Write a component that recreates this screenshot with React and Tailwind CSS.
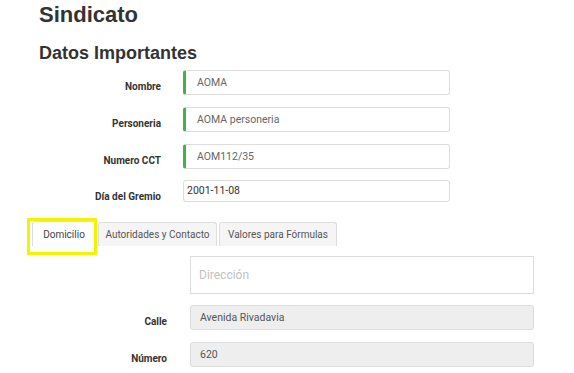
export default function App() {
  const topRows = [
    { label: "Nombre", value: "AOMA", green: true },
    { label: "Personeria", value: "AOMA personeria", green: true },
    { label: "Numero CCT", value: "AOM112/35", green: true },
  ];
  return (
    <div className="w-[574px] h-[373px] overflow-hidden bg-white font-['Roboto',sans-serif] text-[#333]">
      <h1 className="pl-[39px] pt-[2px] h-[28px] text-[22px] leading-[26px] font-bold font-['Liberation_Sans',Arial,sans-serif] text-[#333]">
        Sindicato
      </h1>
      <h2 className="pl-[39px] mt-[14px] h-[22px] text-[18px] leading-[22px] font-bold font-['Liberation_Sans',Arial,sans-serif] text-[#333]">
        Datos Importantes
      </h2>
      <div className="mt-[6px] flex flex-col gap-[12px]">
        {topRows.map((r) => (
          <div key={r.label} className="flex items-start">
            <div className="w-[161px] pt-[10px] text-right text-[10px] leading-[14px] font-bold text-[#333]">
              {r.label}
            </div>
            <div className="ml-[22px] w-[267px] h-[25px] flex items-center rounded-[3px] border border-[#dcdcdc] border-l-[3px] border-l-[#44b04c] pl-[11px] text-[10.5px] text-[#666]">
              {r.value}
            </div>
          </div>
        ))}
        <div className="flex items-start -mt-[1px]">
          <div className="w-[161px] pt-[10px] text-right text-[10px] leading-[14px] font-bold text-[#333]">
            Día del Gremio
          </div>
          <div className="ml-[22px] w-[267px] h-[22px] flex items-center rounded-[3px] border border-[#dcdcdc] pl-[3px] text-[10.5px] text-[#333]">
            2001-11-08
          </div>
        </div>
      </div>
      <div className="mt-[17px] ml-[32px] flex items-end gap-[2px] h-[25px]">
        <div className="relative w-[64px] h-[25px] flex items-center justify-center rounded-t-[3px] border border-b-0 border-[#dddddd] bg-white text-[10px] text-[#3d4450]">
          Domicilio
          <div className="absolute left-[-6px] top-[-4px] w-[70px] h-[37px] border-[3px] border-[#f5f200]"></div>
        </div>
        <div className="w-[119px] h-[24px] flex items-center justify-center rounded-t-[3px] border border-b-0 border-[#dddddd] bg-[#f5f5f5] text-[10px] text-[#555]">
          Autoridades y Contacto
        </div>
        <div className="w-[118px] h-[24px] flex items-center justify-center rounded-t-[3px] border border-b-0 border-[#dddddd] bg-[#f5f5f5] text-[10px] text-[#555]">
          Valores para Fórmulas
        </div>
      </div>
      <div className="mt-[10px] ml-[190px] w-[344px] h-[38px] flex items-center border border-[#dcdcdc] pl-[8px] text-[12px] text-[#c2c2c2]">
        Dirección
      </div>
      <div className="mt-[11px] flex flex-col gap-[12px]">
        {[
          { label: "Calle", value: "Avenida Rivadavia" },
          { label: "Número", value: "620" },
        ].map((r) => (
          <div key={r.label} className="flex items-start">
            <div className="w-[167px] pt-[10px] text-right text-[10px] leading-[14px] font-bold text-[#333]">
              {r.label}
            </div>
            <div className="ml-[23px] w-[344px] h-[25px] flex items-center rounded-[3px] border border-[#dcdcdc] bg-[#eeeeee] pl-[9px] text-[10.5px] text-[#555]">
              {r.value}
            </div>
          </div>
        ))}
      </div>
    </div>
  );
}
